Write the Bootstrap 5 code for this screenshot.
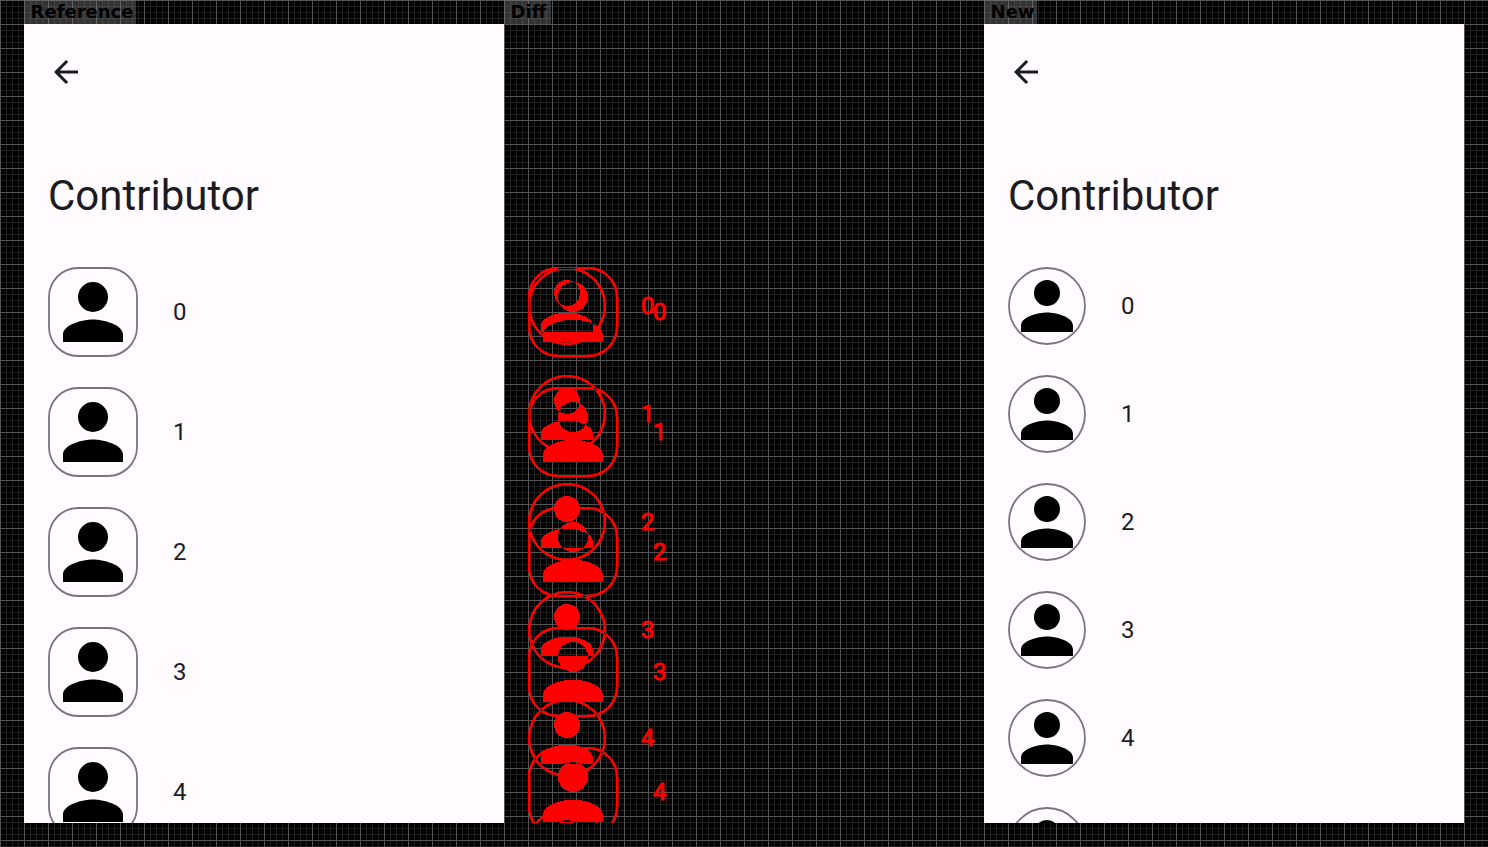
<!DOCTYPE html>
<html lang="en">
<head>
<meta charset="utf-8">
<title>Contributor comparison</title>
<link href="https://cdn.jsdelivr.net/npm/bootstrap@5.3.0/dist/css/bootstrap.min.css" rel="stylesheet">
<style>
  body {
    width: 1488px; height: 847px;
    background-color: #000;
    background-image:
      linear-gradient(#555 1px, transparent 1px),
      linear-gradient(90deg, #555 1px, transparent 1px),
      linear-gradient(#202020 1px, transparent 1px),
      linear-gradient(90deg, #202020 1px, transparent 1px);
    background-size: 24px 24px, 24px 24px, 6px 6px, 6px 6px;
    padding: 0 24px;
  }
  .pane { width: 480px; }
  .pane-label {
    height: 24px; padding-left: 6.6px;
    background: rgba(128,128,128,.4);
    font: bold 18px/24px "DejaVu Sans", sans-serif;
    color: #000; white-space: nowrap;
  }
  .label-ref { width: 112px; } .label-diff { width: 47px; } .label-new { width: 53px; }
  .screen { height: 799px; background: #fffbff; color: #1c1b1f; font-family: Roboto, sans-serif; padding: 30px 24px 0; }
  .screen h1 { font-size: 42px; line-height: 54px; font-weight: 400; margin: 79px 0 44px; }
  .people { gap: 30px; }
  .person { gap: 35px; font-size: 24px; line-height: 36px; }
</style>
<script src="https://cdn.jsdelivr.net/npm/bootstrap@5.3.0/dist/js/bootstrap.bundle.min.js"></script>
</head>
<body class="overflow-hidden">
<main class="d-flex">
  <section class="pane">
    <div class="pane-label label-ref">Reference</div>
    <div class="screen overflow-hidden">
      <svg class="d-block" width="36" height="36" viewBox="0 0 24 24" fill="#1c1b1f"><path d="M20 11H7.83l5.59-5.59L12 4l-8 8 8 8 1.41-1.41L7.83 13H20v-2z"/></svg>
      <h1>Contributor</h1>
      <div class="people d-flex flex-column" data-size="90"></div>
    </div>
  </section>
  <section class="pane">
    <div class="pane-label label-diff">Diff</div>
    <svg class="d-block" id="diff" width="480" height="799" fill="#f00" font-family="Roboto, sans-serif" font-size="24"></svg>
  </section>
  <section class="pane">
    <div class="pane-label label-new">New</div>
    <div class="screen overflow-hidden">
      <svg class="d-block" width="36" height="36" viewBox="0 0 24 24" fill="#1c1b1f"><path d="M20 11H7.83l5.59-5.59L12 4l-8 8 8 8 1.41-1.41L7.83 13H20v-2z"/></svg>
      <h1>Contributor</h1>
      <div class="people d-flex flex-column" data-size="78"></div>
    </div>
  </section>
</main>
<script>
  const radiusFor = size => size === 90 ? 30 : 39;
  // Rows that start inside the visible screen, and those whose number does too
  const rowsFor = size => size === 90 ? 5 : 6;
  const numbered = 5;

  // Person glyph on a 24-unit grid, scaled to the avatar size and moved to x, y
  function personPath(x, y, size) {
    const k = size / 24, n = v => (v * k).toFixed(3);
    return `M${x + 12 * k} ${y + 12 * k}` +
      `a${n(4)} ${n(4)} 0 1 0 0 ${n(-8)}a${n(4)} ${n(4)} 0 1 0 0 ${n(8)}z` +
      `m0 ${n(2)}c${n(-2.67)} 0 ${n(-8)} ${n(1.34)} ${n(-8)} ${n(4)}v${n(2)}h${n(16)}v${n(-2)}` +
      `c0 ${n(-2.66)} ${n(-5.33)} ${n(-4)} ${n(-8)} ${n(-4)}z`;
  }
  function boxPath(x, y, size, r) {
    const s = size - 2 * r;
    return `M${x + r} ${y}h${s}a${r} ${r} 0 0 1 ${r} ${r}v${s}a${r} ${r} 0 0 1 ${-r} ${r}` +
      `h${-s}a${r} ${r} 0 0 1 ${-r} ${-r}v${-s}a${r} ${r} 0 0 1 ${r} ${-r}z`;
  }

  document.querySelectorAll('.people').forEach(list => {
    const size = +list.dataset.size, r = radiusFor(size);
    for (let i = 0; i < rowsFor(size); i++) {
      list.insertAdjacentHTML('beforeend',
        `<div class="person d-flex align-items-center"><svg class="d-block flex-shrink-0" width="${size}" height="${size}">
        <path d="${personPath(0, 0, size)}"/>
        <rect x="1" y="1" width="${size - 2}" height="${size - 2}" rx="${r - 1}" fill="none" stroke="#79747e" stroke-width="1.8"/>
        </svg>${i < numbered ? `<span>${i}</span>` : ''}</div>`);
    }
  });

  // Even-odd filling keeps only the areas where the two lists disagree
  let people = '', rings = '', digits = '';
  for (const size of [90, 78]) {
    const r = radiusFor(size), w = 2;
    for (let i = 0; i < rowsFor(size); i++) {
      const y = 243 + i * (size + 30);
      people += personPath(24, y, size);
      rings += boxPath(24, y, size, r) + boxPath(24 + w, y + w, size - 2 * w, r - w);
      if (i < numbered) digits += `<text x="${24 + size + 35}" y="${y + size / 2 + 8}">${i}</text>`;
    }
  }
  document.getElementById('diff').innerHTML =
    `<g fill-rule="evenodd" shape-rendering="crispEdges"><path d="${people}"/>` +
    `<path d="${rings}" stroke="#f00" stroke-width=".6"/></g><g stroke="#f00" stroke-width="1">${digits}</g>`;
</script>
</body>
</html>
